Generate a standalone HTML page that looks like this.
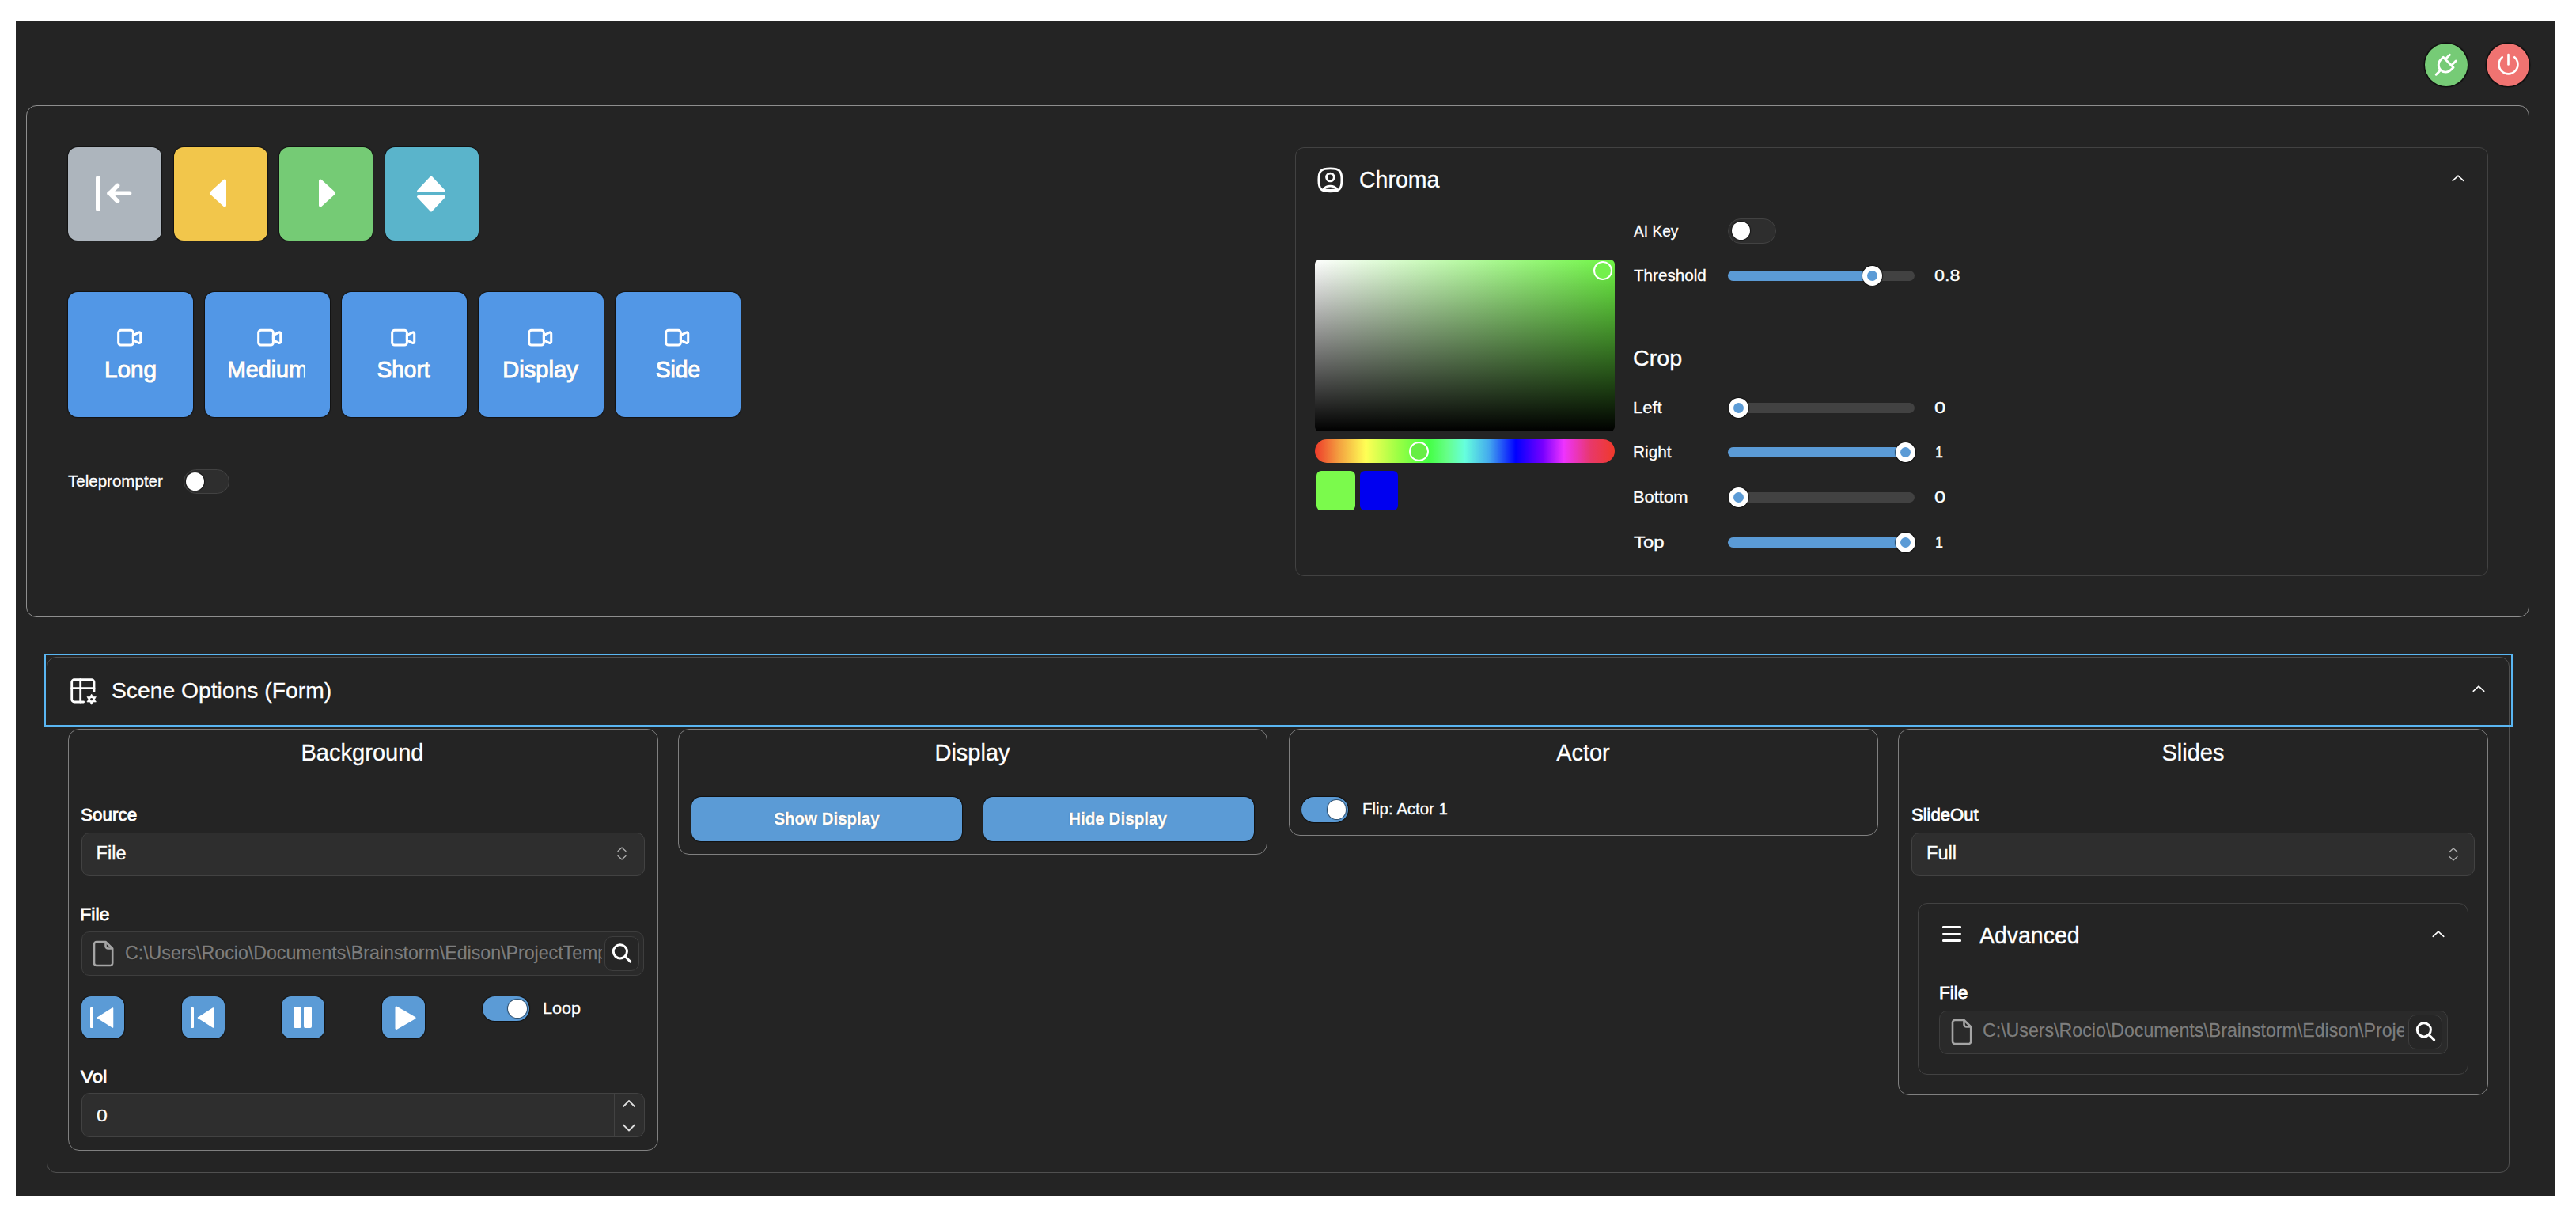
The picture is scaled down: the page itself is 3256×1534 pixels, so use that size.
<!DOCTYPE html>
<html><head><meta charset="utf-8"><style>
html,body{margin:0;padding:0;}
body{width:3256px;height:1534px;background:#fff;position:relative;overflow:hidden;font-family:"Liberation Sans", sans-serif;}
body div, body svg{position:absolute;}
.t{display:inline-block;text-shadow:0 0 1.2px rgba(0,0,0,0.85);}
.h{box-shadow:0 0 1px 1px rgba(0,0,0,0.45);}
</style></head><body>
<div style="left:20px;top:26px;width:3209px;height:1485px;background:#242424;"></div>
<div style="left:3065px;top:54.5px;width:54px;height:54px;border-radius:50%;background:#76cb76;box-shadow:0 0 1px 1.5px rgba(0,0,0,0.6);"></div>
<div style="left:3143.3px;top:54.5px;width:54px;height:54px;border-radius:50%;background:#f07371;box-shadow:0 0 1px 1.5px rgba(0,0,0,0.6);"></div>
<svg style="left:3072.6px;top:62.9px;" width="37.4" height="37.4" viewBox="0 0 24 24"><g fill="none" stroke="#fff" stroke-width="1.85" stroke-linecap="round" stroke-linejoin="round"><path d="M9.785 6l8.215 8.215l-2.054 2.054a5.81 5.81 0 1 1 -8.215 -8.215l2.054 -2.054z"/><path d="M4 20l3.5 -3.5"/><path d="M15 4l-3.5 3.5"/><path d="M20 9l-3.5 3.5"/></g></svg>
<svg style="left:3151.7px;top:62.8px;" width="37" height="37" viewBox="0 0 24 24"><g fill="none" stroke="#fff" stroke-width="1.7" stroke-linecap="round" stroke-linejoin="round"><path d="M7 6a7.75 7.75 0 1 0 10 0"/><path d="M12 4l0 8"/></g></svg>
<div style="left:33.2px;top:133.3px;width:3163.9px;height:646.7px;border:1.7px solid #8e8e8e;border-radius:13px;box-sizing:border-box;"></div>
<div style="left:86px;top:186px;width:118px;height:118px;border-radius:12px;background:#adb5bd;box-shadow:0 0 1px 1px rgba(0,0,0,0.5);"></div>
<div style="left:219.7px;top:186px;width:118px;height:118px;border-radius:12px;background:#f2c64b;box-shadow:0 0 1px 1px rgba(0,0,0,0.5);"></div>
<div style="left:353.3px;top:186px;width:118px;height:118px;border-radius:12px;background:#75cb75;box-shadow:0 0 1px 1px rgba(0,0,0,0.5);"></div>
<div style="left:487px;top:186px;width:118px;height:118px;border-radius:12px;background:#5ab4cb;box-shadow:0 0 1px 1px rgba(0,0,0,0.5);"></div>
<div style="left:121.3px;top:222px;width:5.8px;height:44.7px;background:#fff;border-radius:3px;"></div>
<svg style="left:130px;top:228px;" width="40" height="32" viewBox="0 0 40 32"><g fill="none" stroke="#fff" stroke-width="5.6" stroke-linecap="round" stroke-linejoin="round"><path d="M8 16.3h25.5"/><path d="M18.5 6.5l-9.7 9.8l9.7 9.8"/></g></svg>
<svg style="left:262px;top:224px;" width="26" height="40" viewBox="0 0 26 40"><path d="M22 4.5 L5 20 L22 35.5 Z" fill="#fff" stroke="#fff" stroke-width="4" stroke-linejoin="round"/></svg>
<svg style="left:400.5px;top:224px;" width="26" height="40" viewBox="0 0 26 40"><path d="M4 4.5 L21 20 L4 35.5 Z" fill="#fff" stroke="#fff" stroke-width="4" stroke-linejoin="round"/></svg>
<svg style="left:524px;top:219px;" width="42" height="52" viewBox="0 0 42 52"><path d="M4.5 22.5 L21 5 L37.5 22.5 Z" fill="#fff" stroke="#fff" stroke-width="3" stroke-linejoin="round"/><path d="M4.5 29.5 L21 47 L37.5 29.5 Z" fill="#fff" stroke="#fff" stroke-width="3" stroke-linejoin="round"/></svg>
<div style="left:86px;top:369px;width:158px;height:158px;border-radius:12px;background:#5297e6;box-shadow:0 0 1px 1px rgba(0,0,0,0.5);"></div>
<svg style="left:145px;top:407.9px;" width="37.4" height="37.4" viewBox="0 0 24 24"><g fill="none" stroke="#fff" stroke-width="1.95" stroke-linecap="round" stroke-linejoin="round"><path d="M15 10l4.553 -2.276a1 1 0 0 1 1.447 .894v6.764a1 1 0 0 1 -1.447 .894l-4.553 -2.276v-4z"/><path d="M3 8a2 2 0 0 1 2 -2h8a2 2 0 0 1 2 2v8a2 2 0 0 1 -2 2h-8a2 2 0 0 1 -2 -2z"/></g></svg>
<div style="left:164.51px;top:451.7px;font-size:30px;line-height:30px;font-weight:400;color:#fff;transform-origin:50% 0;transform:translateX(-50%) scaleX(0.9873);-webkit-text-stroke:1.2px #fff;white-space:nowrap;"><span id="cam_Long" class="t">Long</span></div>
<div style="left:259px;top:369px;width:158px;height:158px;border-radius:12px;background:#5297e6;box-shadow:0 0 1px 1px rgba(0,0,0,0.5);"></div>
<svg style="left:322.3px;top:407.9px;" width="37.4" height="37.4" viewBox="0 0 24 24"><g fill="none" stroke="#fff" stroke-width="1.95" stroke-linecap="round" stroke-linejoin="round"><path d="M15 10l4.553 -2.276a1 1 0 0 1 1.447 .894v6.764a1 1 0 0 1 -1.447 .894l-4.553 -2.276v-4z"/><path d="M3 8a2 2 0 0 1 2 -2h8a2 2 0 0 1 2 2v8a2 2 0 0 1 -2 2h-8a2 2 0 0 1 -2 -2z"/></g></svg>
<div style="left:290px;top:441.7px;width:95px;height:50px;overflow:hidden;">
<div style="left:-2.89px;top:10px;font-size:30px;line-height:30px;font-weight:400;color:#fff;transform-origin:0 0;transform:scaleX(0.9550);-webkit-text-stroke:1.2px #fff;white-space:nowrap;"><span id="cam_Medium" class="t">Medium</span></div>
</div>
<div style="left:432px;top:369px;width:158px;height:158px;border-radius:12px;background:#5297e6;box-shadow:0 0 1px 1px rgba(0,0,0,0.5);"></div>
<svg style="left:491px;top:407.9px;" width="37.4" height="37.4" viewBox="0 0 24 24"><g fill="none" stroke="#fff" stroke-width="1.95" stroke-linecap="round" stroke-linejoin="round"><path d="M15 10l4.553 -2.276a1 1 0 0 1 1.447 .894v6.764a1 1 0 0 1 -1.447 .894l-4.553 -2.276v-4z"/><path d="M3 8a2 2 0 0 1 2 -2h8a2 2 0 0 1 2 2v8a2 2 0 0 1 -2 2h-8a2 2 0 0 1 -2 -2z"/></g></svg>
<div style="left:510.07px;top:451.7px;font-size:30px;line-height:30px;font-weight:400;color:#fff;transform-origin:50% 0;transform:translateX(-50%) scaleX(0.9347);-webkit-text-stroke:1.2px #fff;white-space:nowrap;"><span id="cam_Short" class="t">Short</span></div>
<div style="left:605px;top:369px;width:158px;height:158px;border-radius:12px;background:#5297e6;box-shadow:0 0 1px 1px rgba(0,0,0,0.5);"></div>
<svg style="left:664px;top:407.9px;" width="37.4" height="37.4" viewBox="0 0 24 24"><g fill="none" stroke="#fff" stroke-width="1.95" stroke-linecap="round" stroke-linejoin="round"><path d="M15 10l4.553 -2.276a1 1 0 0 1 1.447 .894v6.764a1 1 0 0 1 -1.447 .894l-4.553 -2.276v-4z"/><path d="M3 8a2 2 0 0 1 2 -2h8a2 2 0 0 1 2 2v8a2 2 0 0 1 -2 2h-8a2 2 0 0 1 -2 -2z"/></g></svg>
<div style="left:682.54px;top:451.7px;font-size:30px;line-height:30px;font-weight:400;color:#fff;transform-origin:50% 0;transform:translateX(-50%) scaleX(0.9711);-webkit-text-stroke:1.2px #fff;white-space:nowrap;"><span id="cam_Display" class="t">Display</span></div>
<div style="left:778px;top:369px;width:158px;height:158px;border-radius:12px;background:#5297e6;box-shadow:0 0 1px 1px rgba(0,0,0,0.5);"></div>
<svg style="left:837px;top:407.9px;" width="37.4" height="37.4" viewBox="0 0 24 24"><g fill="none" stroke="#fff" stroke-width="1.95" stroke-linecap="round" stroke-linejoin="round"><path d="M15 10l4.553 -2.276a1 1 0 0 1 1.447 .894v6.764a1 1 0 0 1 -1.447 .894l-4.553 -2.276v-4z"/><path d="M3 8a2 2 0 0 1 2 -2h8a2 2 0 0 1 2 2v8a2 2 0 0 1 -2 2h-8a2 2 0 0 1 -2 -2z"/></g></svg>
<div style="left:856.53px;top:451.7px;font-size:30px;line-height:30px;font-weight:400;color:#fff;transform-origin:50% 0;transform:translateX(-50%) scaleX(0.9407);-webkit-text-stroke:1.2px #fff;white-space:nowrap;"><span id="cam_Side" class="t">Side</span></div>
<div style="left:85.6px;top:597.02px;font-size:21px;line-height:21px;font-weight:400;color:#fff;transform-origin:0 0;transform:scaleX(0.9779);-webkit-text-stroke:0.35px #fff;white-space:nowrap;"><span id="tele" class="t">Teleprompter</span></div>
<div style="left:231.7px;top:593px;width:58.7px;height:31px;border-radius:16px;background:#2e2e2e;border:1.5px solid #424242;box-sizing:border-box;"></div>
<div style="left:234.5px;top:596.9px;width:23.3px;height:23.3px;border-radius:50%;background:#fff;box-shadow:0 0 1px 1px rgba(0,0,0,0.55);"></div>
<div style="left:1636.5px;top:186px;width:1508.5px;height:541.5px;border:1.5px solid #424242;border-radius:11px;box-sizing:border-box;"></div>
<svg style="left:1662.1px;top:207.6px;" width="38.8" height="38.8" viewBox="0 0 24 24"><g fill="none" stroke="#fff" stroke-width="1.75" stroke-linecap="round" stroke-linejoin="round"><path d="M12 9.9m-3 0a3 3 0 1 0 6 0a3 3 0 1 0 -6 0"/><path d="M12 3c7.2 0 9 1.8 9 9s-1.8 9 -9 9s-9 -1.8 -9 -9s1.8 -9 9 -9z"/><path d="M6.8 19.3C7.8 17.6 9.6 16.8 12 16.8S16.2 17.6 17.2 19.3C15.6 19.9 13.9 20.1 12 20.1S8.4 19.9 6.8 19.3z"/></g></svg>
<div style="left:1718.05px;top:212.12px;font-size:29.5px;line-height:29.5px;font-weight:400;color:#fff;transform-origin:0 0;transform:scaleX(0.9660);-webkit-text-stroke:0.35px #fff;white-space:nowrap;"><span id="chroma" class="t">Chroma</span></div>
<svg style="left:3097px;top:218px;" width="20" height="14" viewBox="0 0 20 14"><path d="M3.2 10.3L10 4.2L16.8 10.3" fill="none" stroke="#fff" stroke-width="1.6" stroke-linecap="round" stroke-linejoin="round"/></svg>
<div style="left:1662px;top:327.5px;width:378.5px;height:217px;border-radius:6px;background:linear-gradient(to top,#000,rgba(0,0,0,0)),linear-gradient(to right,#fff,#6ff545);"></div>
<div style="left:2014.1px;top:329.8px;width:24.4px;height:24.4px;border-radius:50%;border:2.5px solid #fff;background:#74f04c;box-sizing:border-box;"></div>
<div style="left:1662px;top:555.3px;width:378.5px;height:30px;border-radius:15px;background:linear-gradient(to right,#ee3a2a,#f3a040 8%,#ff5 17%,#9f4 28%,#4f4 38%,#6f8 44%,#6fd 50%,#4ae 58%,#00f 67%,#70f 76%,#e3f 83%,#e8386a 92%,#f03a2a);"></div>
<div style="left:1780.5px;top:557.8px;width:25px;height:25px;border-radius:50%;border:2.5px solid #fff;background:#66ee44;box-sizing:border-box;"></div>
<div style="left:1663.6px;top:595px;width:49px;height:50px;border-radius:6px;background:#7bfa4c;"></div>
<div style="left:1719px;top:595px;width:47.5px;height:50px;border-radius:6px;background:#0000f0;"></div>
<div style="left:2065.23px;top:280.82px;font-size:21px;line-height:21px;font-weight:400;color:#fff;transform-origin:0 0;transform:scaleX(0.9115);-webkit-text-stroke:0.35px #fff;white-space:nowrap;"><span id="aikey" class="t">AI Key</span></div>
<div style="left:2184.4px;top:276.4px;width:60.6px;height:31.6px;border-radius:16px;background:#2e2e2e;border:1.5px solid #424242;box-sizing:border-box;"></div>
<div style="left:2189.1px;top:280.1px;width:23.3px;height:23.3px;border-radius:50%;background:#fff;box-shadow:0 0 1px 1px rgba(0,0,0,0.55);"></div>
<div style="left:2065.02px;top:337.22px;font-size:21px;line-height:21px;font-weight:400;color:#fff;transform-origin:0 0;transform:scaleX(0.9835);-webkit-text-stroke:0.35px #fff;white-space:nowrap;"><span id="thr" class="t">Threshold</span></div>
<div style="left:2184.4px;top:342px;width:236.1px;height:13px;border-radius:7px;background:#424242;"></div>
<div style="left:2184.4px;top:342px;width:182px;height:13px;border-radius:7px 0 0 7px;background:#5b9bd6;"></div>
<div style="left:2353.7px;top:335.8px;width:25.4px;height:25.4px;border-radius:50%;background:#fff;box-shadow:0 0 1px 1px rgba(0,0,0,0.55);"></div>
<div style="left:2359.9px;top:342px;width:13px;height:13px;border-radius:50%;background:#5b9bd6;"></div>
<div style="left:2445.46px;top:337.22px;font-size:21px;line-height:21px;font-weight:400;color:#fff;transform-origin:0 0;transform:scaleX(1.1111);-webkit-text-stroke:0.35px #fff;white-space:nowrap;"><span id="thr_v" class="t">0.8</span></div>
<div style="left:2063.95px;top:438.79px;font-size:28px;line-height:28px;font-weight:400;color:#fff;transform-origin:0 0;transform:scaleX(1.0263);-webkit-text-stroke:0.35px #fff;white-space:nowrap;"><span id="crop" class="t">Crop</span></div>
<div style="left:2063.9px;top:503.92px;font-size:21px;line-height:21px;font-weight:400;color:#fff;transform-origin:0 0;transform:scaleX(1.0485);-webkit-text-stroke:0.35px #fff;white-space:nowrap;"><span id="left" class="t">Left</span></div>
<div style="left:2184.4px;top:508.7px;width:236.1px;height:13px;border-radius:7px;background:#424242;"></div>
<div style="left:2184.9px;top:502.5px;width:25.4px;height:25.4px;border-radius:50%;background:#fff;box-shadow:0 0 1px 1px rgba(0,0,0,0.55);"></div>
<div style="left:2191.1px;top:508.7px;width:13px;height:13px;border-radius:50%;background:#5b9bd6;"></div>
<div style="left:2445.33px;top:503.92px;font-size:21px;line-height:21px;font-weight:400;color:#fff;transform-origin:0 0;transform:scaleX(1.2222);-webkit-text-stroke:0.35px #fff;white-space:nowrap;"><span id="left_v" class="t">0</span></div>
<div style="left:2064.02px;top:560.02px;font-size:21px;line-height:21px;font-weight:400;color:#fff;transform-origin:0 0;transform:scaleX(0.9915);-webkit-text-stroke:0.35px #fff;white-space:nowrap;"><span id="right" class="t">Right</span></div>
<div style="left:2184.4px;top:564.8px;width:236.1px;height:13px;border-radius:7px;background:#424242;"></div>
<div style="left:2184.4px;top:564.8px;width:224.3px;height:13px;border-radius:7px 0 0 7px;background:#5b9bd6;"></div>
<div style="left:2396px;top:558.6px;width:25.4px;height:25.4px;border-radius:50%;background:#fff;box-shadow:0 0 1px 1px rgba(0,0,0,0.55);"></div>
<div style="left:2402.2px;top:564.8px;width:13px;height:13px;border-radius:50%;background:#5b9bd6;"></div>
<div style="left:2445.77px;top:560.02px;font-size:21px;line-height:21px;font-weight:400;color:#fff;transform-origin:0 0;transform:scaleX(0.8556);-webkit-text-stroke:0.35px #fff;white-space:nowrap;"><span id="right_v" class="t">1</span></div>
<div style="left:2063.91px;top:617.42px;font-size:21px;line-height:21px;font-weight:400;color:#fff;transform-origin:0 0;transform:scaleX(1.0429);-webkit-text-stroke:0.35px #fff;white-space:nowrap;"><span id="bottom" class="t">Bottom</span></div>
<div style="left:2184.4px;top:622.2px;width:236.1px;height:13px;border-radius:7px;background:#424242;"></div>
<div style="left:2184.9px;top:616px;width:25.4px;height:25.4px;border-radius:50%;background:#fff;box-shadow:0 0 1px 1px rgba(0,0,0,0.55);"></div>
<div style="left:2191.1px;top:622.2px;width:13px;height:13px;border-radius:50%;background:#5b9bd6;"></div>
<div style="left:2445.33px;top:617.42px;font-size:21px;line-height:21px;font-weight:400;color:#fff;transform-origin:0 0;transform:scaleX(1.2222);-webkit-text-stroke:0.35px #fff;white-space:nowrap;"><span id="bottom_v" class="t">0</span></div>
<div style="left:2064.86px;top:674.32px;font-size:21px;line-height:21px;font-weight:400;color:#fff;transform-origin:0 0;transform:scaleX(1.1438);-webkit-text-stroke:0.35px #fff;white-space:nowrap;"><span id="top" class="t">Top</span></div>
<div style="left:2184.4px;top:679.1px;width:236.1px;height:13px;border-radius:7px;background:#424242;"></div>
<div style="left:2184.4px;top:679.1px;width:224.3px;height:13px;border-radius:7px 0 0 7px;background:#5b9bd6;"></div>
<div style="left:2396px;top:672.9px;width:25.4px;height:25.4px;border-radius:50%;background:#fff;box-shadow:0 0 1px 1px rgba(0,0,0,0.55);"></div>
<div style="left:2402.2px;top:679.1px;width:13px;height:13px;border-radius:50%;background:#5b9bd6;"></div>
<div style="left:2445.77px;top:674.32px;font-size:21px;line-height:21px;font-weight:400;color:#fff;transform-origin:0 0;transform:scaleX(0.8556);-webkit-text-stroke:0.35px #fff;white-space:nowrap;"><span id="top_v" class="t">1</span></div>
<div style="left:59.2px;top:830.2px;width:3112.4px;height:652px;border:1.7px solid #505050;border-radius:12px;box-sizing:border-box;"></div>
<div style="left:55.5px;top:826px;width:3120px;height:91.5px;border:2.6px solid #5ab6f2;box-sizing:border-box;"></div>
<svg style="left:85.65px;top:853.8px;" width="37.7" height="37.7" viewBox="0 0 24 24"><g fill="none" stroke="#fff" stroke-width="1.8" stroke-linecap="round" stroke-linejoin="round"><path d="M12.5 21h-7.5a2 2 0 0 1 -2 -2v-14a2 2 0 0 1 2 -2h14a2 2 0 0 1 2 2v7.5"/><path d="M3 10h18"/><path d="M10 3v18"/></g><path fill="#fff" stroke="#fff" stroke-width="0.4" stroke-linejoin="round" d="M18.90 14.70L20.15 16.73L22.54 16.80L21.40 18.90L22.54 21.00L20.15 21.07L18.90 23.10L17.65 21.07L15.26 21.00L16.40 18.90L15.26 16.80L17.65 16.73Z"/><circle cx="18.9" cy="18.9" r="1.05" fill="#242424"/></svg>
<div style="left:141.4px;top:857.67px;font-size:28.5px;line-height:28.5px;font-weight:400;color:#fff;transform-origin:0 0;transform:scaleX(0.9921);-webkit-text-stroke:0.35px #fff;white-space:nowrap;"><span id="scene" class="t">Scene Options (Form)</span></div>
<svg style="left:3122.8px;top:863px;" width="20" height="14" viewBox="0 0 20 14"><path d="M3.2 10.3L10 4.2L16.8 10.3" fill="none" stroke="#fff" stroke-width="1.6" stroke-linecap="round" stroke-linejoin="round"/></svg>
<div style="left:86px;top:920.6px;width:746px;height:533.9px;border:1.7px solid #808080;border-radius:14px;box-sizing:border-box;"></div>
<div style="left:857px;top:920.6px;width:745px;height:159.9px;border:1.7px solid #808080;border-radius:14px;box-sizing:border-box;"></div>
<div style="left:1628.6px;top:920.6px;width:745.8px;height:135.2px;border:1.7px solid #808080;border-radius:14px;box-sizing:border-box;"></div>
<div style="left:2398.6px;top:920.6px;width:746.4px;height:463.2px;border:1.7px solid #808080;border-radius:14px;box-sizing:border-box;"></div>
<div style="left:458.3px;top:936.02px;font-size:29.5px;line-height:29.5px;font-weight:400;color:#fff;transform-origin:50% 0;transform:translateX(-50%) scaleX(0.9850);-webkit-text-stroke:0.35px #fff;white-space:nowrap;"><span id="t_bg" class="t">Background</span></div>
<div style="left:101.96px;top:1020.4px;font-size:21.5px;line-height:21.5px;font-weight:400;color:#fff;transform-origin:0 0;transform:scaleX(1.0439);-webkit-text-stroke:0.8px #fff;white-space:nowrap;"><span id="l_source" class="t">Source</span></div>
<div style="left:103.2px;top:1052.2px;width:711.8px;height:55.3px;border:1.5px solid #424242;border-radius:10px;background:#2e2e2e;box-sizing:border-box;"></div>
<div style="left:121.6px;top:1067.1px;font-size:23.5px;line-height:23.5px;font-weight:400;color:#fff;transform-origin:0 0;transform:scaleX(1.0000);-webkit-text-stroke:0.35px #fff;white-space:nowrap;"><span id="v_file" class="t">File</span></div>
<svg style="left:777.7px;top:1069.4px;" width="16" height="20" viewBox="0 0 16 20"><g fill="none" stroke="#b0b0b0" stroke-width="1.3" stroke-linecap="round" stroke-linejoin="round"><path d="M3 6.5L8 2L13 6.5"/><path d="M3 12.5L8 17L13 12.5"/></g></svg>
<div style="left:101.03px;top:1145.8px;font-size:21.5px;line-height:21.5px;font-weight:400;color:#fff;transform-origin:0 0;transform:scaleX(1.0844);-webkit-text-stroke:0.8px #fff;white-space:nowrap;"><span id="l_file" class="t">File</span></div>
<div style="left:103.2px;top:1176.6px;width:711.3px;height:56.8px;border:1.5px solid #3e3e3e;border-radius:10px;background:#2a2a2a;box-sizing:border-box;"></div>
<svg style="left:114.6px;top:1186.5px;" width="31" height="38" viewBox="0 0 31 38"><g fill="none" stroke="#a5a5a5" stroke-width="2.6" stroke-linejoin="round"><path d="M4 6a3 3 0 0 1 3 -3h11.5l8.7 8.5v18.5a3 3 0 0 1 -3 3h-17.2a3 3 0 0 1 -3 -3z"/><path d="M18.5 3v5.5a3 3 0 0 0 3 3h5.7"/></g></svg>
<div style="left:157.3px;top:1183.23px;width:603.7px;height:43.7px;overflow:hidden;">
<div style="left:0.33px;top:10px;font-size:23.7px;line-height:23.7px;font-weight:400;color:#7e7e7e;transform-origin:0 0;transform:scaleX(0.9780);-webkit-text-stroke:0.35px #7e7e7e;white-space:nowrap;"><span id="path1" class="t">C:\Users\Rocio\Documents\Brainstorm\Edison\ProjectTemplates\Slides</span></div>
</div>
<div style="left:763.9px;top:1183px;width:44px;height:43.8px;border:1.5px solid #3e3e3e;border-radius:10px;background:#262626;box-sizing:border-box;"></div>
<svg style="left:771.4px;top:1189.9px;" width="30" height="30" viewBox="0 0 28 28"><g fill="none" stroke="#fff" stroke-width="2.8" stroke-linecap="round"><circle cx="12" cy="11.5" r="8"/><path d="M18 17.5l6 6"/></g></svg>
<div style="left:102.6px;top:1258.6px;width:54px;height:53.6px;border-radius:12px;background:#5b9bd6;box-shadow:0 0 1px 1px rgba(0,0,0,0.5);"></div>
<div style="left:229.5px;top:1258.6px;width:54px;height:53.6px;border-radius:12px;background:#5b9bd6;box-shadow:0 0 1px 1px rgba(0,0,0,0.5);"></div>
<div style="left:356px;top:1258.6px;width:54px;height:53.6px;border-radius:12px;background:#5b9bd6;box-shadow:0 0 1px 1px rgba(0,0,0,0.5);"></div>
<div style="left:483px;top:1258.6px;width:54px;height:53.6px;border-radius:12px;background:#5b9bd6;box-shadow:0 0 1px 1px rgba(0,0,0,0.5);"></div>
<div style="left:114.4px;top:1273px;width:4px;height:25.5px;background:#fff;border-radius:1px;"></div>
<svg style="left:119.1px;top:1271px;" width="26" height="30" viewBox="0 0 26 30"><path d="M23.5 3L4.5 15L23.5 27Z" fill="#fff" stroke="#fff" stroke-width="1.5" stroke-linejoin="round"/></svg>
<div style="left:241.3px;top:1273px;width:4px;height:25.5px;background:#fff;border-radius:1px;"></div>
<svg style="left:246px;top:1271px;" width="26" height="30" viewBox="0 0 26 30"><path d="M23.5 3L4.5 15L23.5 27Z" fill="#fff" stroke="#fff" stroke-width="1.5" stroke-linejoin="round"/></svg>
<div style="left:370.8px;top:1272.2px;width:10px;height:26.7px;background:#fff;border-radius:2px;"></div>
<div style="left:384px;top:1272.2px;width:10px;height:26.7px;background:#fff;border-radius:2px;"></div>
<svg style="left:497px;top:1269px;" width="30" height="34" viewBox="0 0 30 34"><path d="M4 4L27 17.2L4 30.5Z" fill="#fff" stroke="#fff" stroke-width="3" stroke-linejoin="round"/></svg>
<div style="left:610.2px;top:1258.7px;width:59px;height:31.5px;border-radius:16px;background:#5b9bd6;box-shadow:0 0 1px 1px rgba(0,0,0,0.55);"></div>
<div style="left:642.3px;top:1262.5px;width:23.4px;height:23.4px;border-radius:50%;background:#fff;box-shadow:0 0 1px 1px rgba(0,0,0,0.55);"></div>
<div style="left:686.14px;top:1263.22px;font-size:21px;line-height:21px;font-weight:400;color:#fff;transform-origin:0 0;transform:scaleX(1.0295);-webkit-text-stroke:0.35px #fff;white-space:nowrap;"><span id="loop" class="t">Loop</span></div>
<div style="left:101.72px;top:1350.8px;font-size:21.5px;line-height:21.5px;font-weight:400;color:#fff;transform-origin:0 0;transform:scaleX(1.1143);-webkit-text-stroke:0.8px #fff;white-space:nowrap;"><span id="l_vol" class="t">Vol</span></div>
<div style="left:102.9px;top:1380.8px;width:712.1px;height:56px;border:1.5px solid #424242;border-radius:10px;background:#2e2e2e;box-sizing:border-box;"></div>
<div style="left:776px;top:1382px;width:1.2px;height:53.6px;background:#424242;"></div>
<svg style="left:785px;top:1386px;" width="20" height="16" viewBox="0 0 20 16"><path d="M3 12L10 5L17 12" fill="none" stroke="#ddd" stroke-width="1.8" stroke-linecap="round" stroke-linejoin="round"/></svg>
<svg style="left:785px;top:1416.5px;" width="20" height="16" viewBox="0 0 20 16"><path d="M3 4.5L10 11.5L17 4.5" fill="none" stroke="#ddd" stroke-width="1.8" stroke-linecap="round" stroke-linejoin="round"/></svg>
<div style="left:121.85px;top:1398.75px;font-size:22.5px;line-height:22.5px;font-weight:400;color:#fff;transform-origin:0 0;transform:scaleX(1.1000);-webkit-text-stroke:0.35px #fff;white-space:nowrap;"><span id="v_vol" class="t">0</span></div>
<div style="left:1229.4px;top:936.02px;font-size:29.5px;line-height:29.5px;font-weight:400;color:#fff;transform-origin:50% 0;transform:translateX(-50%) scaleX(0.9830);-webkit-text-stroke:0.35px #fff;white-space:nowrap;"><span id="t_disp" class="t">Display</span></div>
<div style="left:874.1px;top:1006.7px;width:342.3px;height:56.8px;border-radius:12px;background:#5b9bd6;box-shadow:0 0 1px 1px rgba(0,0,0,0.55);"></div>
<div style="left:1242.7px;top:1006.9px;width:342.4px;height:56.5px;border-radius:12px;background:#5b9bd6;box-shadow:0 0 1px 1px rgba(0,0,0,0.55);"></div>
<div style="left:1045.02px;top:1023.94px;font-size:21.8px;line-height:21.8px;font-weight:700;color:#fff;transform-origin:50% 0;transform:translateX(-50%) scaleX(0.9397);-webkit-text-stroke:0.4px #fff;white-space:nowrap;"><span id="b_show" class="t">Show Display</span></div>
<div style="left:1413.33px;top:1023.94px;font-size:21.8px;line-height:21.8px;font-weight:700;color:#fff;transform-origin:50% 0;transform:translateX(-50%) scaleX(0.9485);-webkit-text-stroke:0.4px #fff;white-space:nowrap;"><span id="b_hide" class="t">Hide Display</span></div>
<div style="left:2001.19px;top:936.02px;font-size:29.5px;line-height:29.5px;font-weight:400;color:#fff;transform-origin:50% 0;transform:translateX(-50%) scaleX(0.9794);-webkit-text-stroke:0.35px #fff;white-space:nowrap;"><span id="t_actor" class="t">Actor</span></div>
<div style="left:1645px;top:1007px;width:59px;height:32px;border-radius:16px;background:#5b9bd6;box-shadow:0 0 1px 1px rgba(0,0,0,0.55);"></div>
<div style="left:1677.5px;top:1010.9px;width:23.8px;height:23.8px;border-radius:50%;background:#fff;box-shadow:0 0 1px 1px rgba(0,0,0,0.55);"></div>
<div style="left:1722.01px;top:1012.24px;font-size:20.5px;line-height:20.5px;font-weight:400;color:#fff;transform-origin:0 0;transform:scaleX(0.9962);-webkit-text-stroke:0.35px #fff;white-space:nowrap;"><span id="flip" class="t">Flip: Actor 1</span></div>
<div style="left:2771.89px;top:936.02px;font-size:29.5px;line-height:29.5px;font-weight:400;color:#fff;transform-origin:50% 0;transform:translateX(-50%) scaleX(0.9844);-webkit-text-stroke:0.35px #fff;white-space:nowrap;"><span id="t_slides" class="t">Slides</span></div>
<div style="left:2415.97px;top:1020.1px;font-size:21.5px;line-height:21.5px;font-weight:400;color:#fff;transform-origin:0 0;transform:scaleX(1.0259);-webkit-text-stroke:0.8px #fff;white-space:nowrap;"><span id="l_slideout" class="t">SlideOut</span></div>
<div style="left:2416.2px;top:1052.2px;width:711.8px;height:55.3px;border:1.5px solid #424242;border-radius:10px;background:#2e2e2e;box-sizing:border-box;"></div>
<div style="left:2434.78px;top:1067.1px;font-size:23.5px;line-height:23.5px;font-weight:400;color:#fff;transform-origin:0 0;transform:scaleX(1.0059);-webkit-text-stroke:0.35px #fff;white-space:nowrap;"><span id="v_full" class="t">Full</span></div>
<svg style="left:3092.7px;top:1069.9px;" width="16" height="20" viewBox="0 0 16 20"><g fill="none" stroke="#b0b0b0" stroke-width="1.3" stroke-linecap="round" stroke-linejoin="round"><path d="M3 6.5L8 2L13 6.5"/><path d="M3 12.5L8 17L13 12.5"/></g></svg>
<div style="left:2423.8px;top:1141.2px;width:696.5px;height:217.2px;border:1.5px solid #424242;border-radius:12px;box-sizing:border-box;"></div>
<div style="left:2455px;top:1170px;width:23.5px;height:2.6px;background:#fff;border-radius:1.3px;"></div>
<div style="left:2455px;top:1178.5px;width:23.5px;height:2.6px;background:#fff;border-radius:1.3px;"></div>
<div style="left:2455px;top:1187px;width:23.5px;height:2.6px;background:#fff;border-radius:1.3px;"></div>
<div style="left:2501.62px;top:1167.02px;font-size:29.5px;line-height:29.5px;font-weight:400;color:#fff;transform-origin:0 0;transform:scaleX(0.9648);-webkit-text-stroke:0.35px #fff;white-space:nowrap;"><span id="t_adv" class="t">Advanced</span></div>
<svg style="left:3071.8px;top:1173px;" width="20" height="14" viewBox="0 0 20 14"><path d="M3.2 10.3L10 4.2L16.8 10.3" fill="none" stroke="#fff" stroke-width="1.6" stroke-linecap="round" stroke-linejoin="round"/></svg>
<div style="left:2450.53px;top:1245px;font-size:21.5px;line-height:21.5px;font-weight:400;color:#fff;transform-origin:0 0;transform:scaleX(1.0515);-webkit-text-stroke:0.8px #fff;white-space:nowrap;"><span id="l_file2" class="t">File</span></div>
<div style="left:2451.2px;top:1276.5px;width:642.8px;height:55.9px;border:1.5px solid #3e3e3e;border-radius:10px;background:#2a2a2a;box-sizing:border-box;"></div>
<svg style="left:2463.5px;top:1285.9px;" width="31" height="38" viewBox="0 0 31 38"><g fill="none" stroke="#a5a5a5" stroke-width="2.6" stroke-linejoin="round"><path d="M4 6a3 3 0 0 1 3 -3h11.5l8.7 8.5v18.5a3 3 0 0 1 -3 3h-17.2a3 3 0 0 1 -3 -3z"/><path d="M18.5 3v5.5a3 3 0 0 0 3 3h5.7"/></g></svg>
<div style="left:2505.3px;top:1281.23px;width:534.2px;height:43.7px;overflow:hidden;">
<div style="left:0.33px;top:10px;font-size:23.7px;line-height:23.7px;font-weight:400;color:#7e7e7e;transform-origin:0 0;transform:scaleX(0.9780);-webkit-text-stroke:0.35px #7e7e7e;white-space:nowrap;"><span id="path2" class="t">C:\Users\Rocio\Documents\Brainstorm\Edison\ProjectTemplates\Slides</span></div>
</div>
<div style="left:3044.3px;top:1281.6px;width:43px;height:44px;border:1.5px solid #3e3e3e;border-radius:10px;background:#262626;box-sizing:border-box;"></div>
<svg style="left:3051.3px;top:1288.6px;" width="30" height="30" viewBox="0 0 28 28"><g fill="none" stroke="#fff" stroke-width="2.8" stroke-linecap="round"><circle cx="12" cy="11.5" r="8"/><path d="M18 17.5l6 6"/></g></svg>
</body></html>
